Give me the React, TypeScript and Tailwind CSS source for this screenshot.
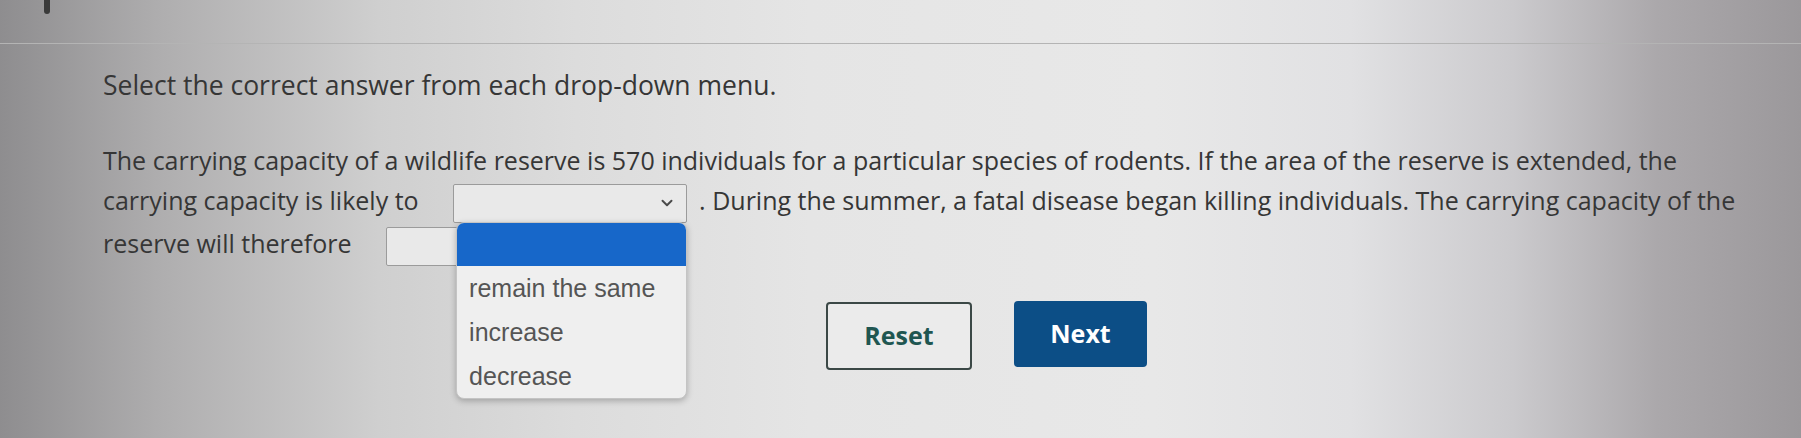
import React from 'react';
import { ChevronDown } from 'lucide-react';

const options = ['remain the same', 'increase', 'decrease'];

function Dropdown({ open = false, arrow = true }: { open?: boolean; arrow?: boolean }) {
  return (
    <span className="relative inline-block align-middle">
      <span className="flex items-center justify-end w-[234px] h-[39px] border-[1.5px] border-[#9b9b9b] bg-[#e9e9e9] rounded-[2px] pr-[10px]">
        {arrow && <ChevronDown size={18} strokeWidth={2.6} className="text-[#4a4a4a]" />}
      </span>
      {open && (
        <span className="absolute left-[3px] top-[38px] z-10 block w-[231px] rounded-lg bg-[#efefef] border border-[#c4c4c4] shadow-[0_2px_6px_rgba(0,0,0,0.25)] overflow-hidden font-['Liberation_Sans',Arial,sans-serif]">
          <span className="block h-[43px] bg-[#1767c9]" />
          {options.map((o) => (
            <span key={o} className="flex items-center h-[44px] pl-[12px] text-[25px] text-[#555]">
              {o}
            </span>
          ))}
        </span>
      )}
    </span>
  );
}

export default function App() {
  return (
    <div className="min-h-screen w-full overflow-hidden bg-[linear-gradient(90deg,#8e8d8f_0%,#afaeaf_9%,#cfcfcf_21%,#dcdcdc_32%,#e5e5e5_45%,#e8e8e8_64%,#e1e1e3_75%,#cbcacd_84%,#aba8ab_92%,#9b989b_100%)] font-['Open_Sans',sans-serif] text-[#363636]">
      {/* Header strip */}
      <div className="h-[44px] border-b border-[#b4b4b4] pl-[44px]">
        <span className="block w-[6px] h-[14px] bg-[#3a3a3a] rounded-b-sm" />
      </div>

      <div className="pl-[103px]">
        <h2 className="mt-[21px] text-[26.5px] leading-[40px]">Select the correct answer from each drop-down menu.</h2>

        <p className="mt-[35px] w-[1660px] text-[25px] leading-[40px]">
          The carrying capacity of a wildlife reserve is 570 individuals for a particular species of rodents. If the area of the reserve is extended, the carrying capacity is likely to{' '}
          <span className="inline-block ml-[28px] mr-[12px]">
            <Dropdown open />
          </span>
          . During the summer, a fatal disease began killing individuals. The carrying capacity of the reserve will therefore{' '}
          <span className="inline-block ml-[28px]">
            <Dropdown arrow={false} />
          </span>
        </p>

        <div className="mt-[36px] ml-[723px] flex items-start gap-[42px]">
          <button className="w-[146px] h-[68px] border-2 border-[#3b4846] rounded-[4px] bg-[#ebebeb] text-[25px] font-bold text-[#1f5651]">
            Reset
          </button>
          <button className="w-[133px] h-[66px] -mt-[1px] rounded-[4px] bg-[#0c4e86] text-[25px] font-bold text-white">
            Next
          </button>
        </div>
      </div>
    </div>
  );
}
